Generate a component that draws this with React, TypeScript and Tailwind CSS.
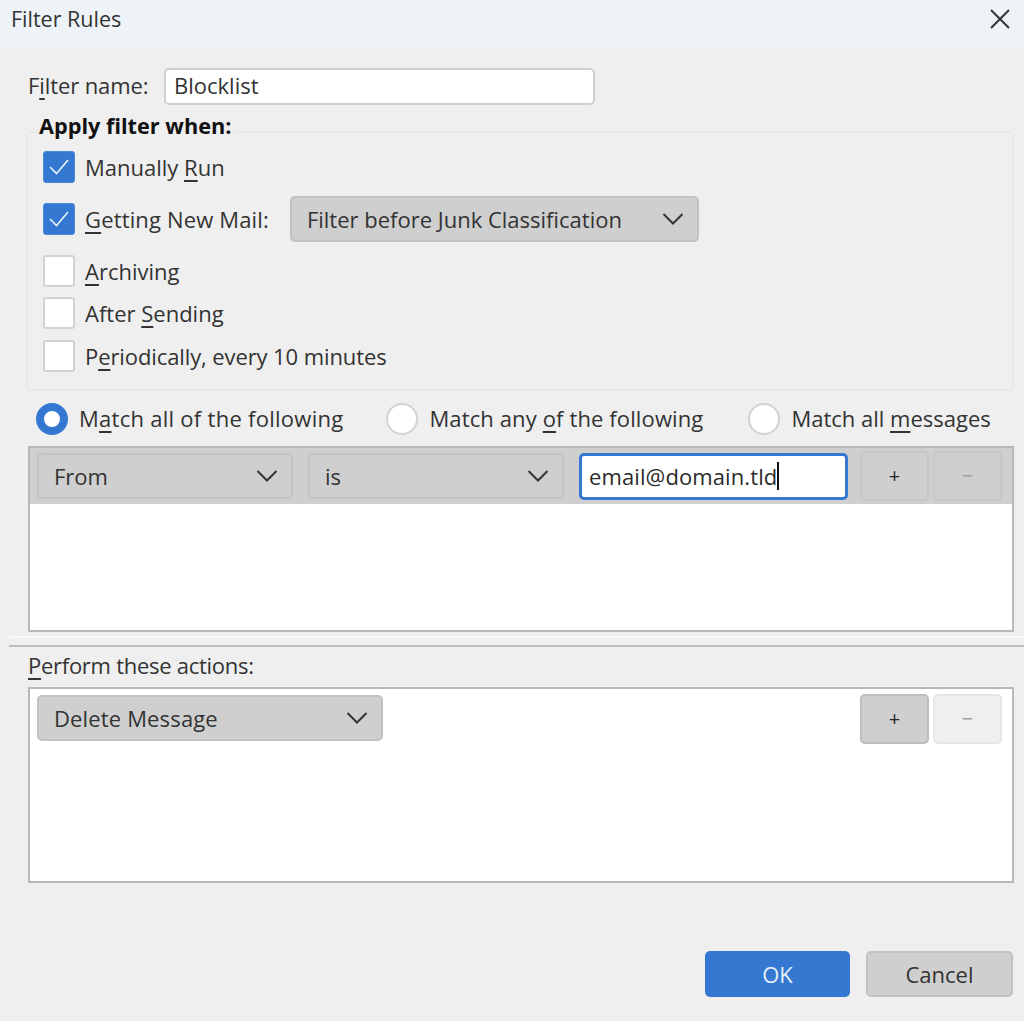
import React from "react";

function Chevron() {
  return (
    <svg width="22" height="14" viewBox="0 0 22 14" fill="none" className="shrink-0">
      <path d="M1.5 2 L11 11.5 L20.5 2" stroke="#333" strokeWidth="2" />
    </svg>
  );
}

function Check({ on, label }: { on: boolean; label: React.ReactNode }) {
  return (
    <div className="flex items-center gap-[10px]">
      {on ? (
        <div className="w-[32px] h-[32px] rounded-[3px] bg-[#3478d2] border border-[#4a88d8] flex items-center justify-center">
          <svg width="22" height="18" viewBox="0 0 22 18" fill="none">
            <path d="M2 9 L8.5 15.5 L20 2" stroke="#eaf2fb" strokeWidth="1.6" />
          </svg>
        </div>
      ) : (
        <div className="w-[32px] h-[32px] rounded-[3px] bg-white border-2 border-[#d2d2d2]" />
      )}
      <span>{label}</span>
    </div>
  );
}

function Radio({ on, label, className }: { on?: boolean; label: React.ReactNode; className: string }) {
  return (
    <div className={"flex items-center gap-[11px] " + className}>
      {on ? (
        <div className="w-[32px] h-[32px] rounded-full border-[8px] border-[#3478d2] bg-white" />
      ) : (
        <div className="w-[32px] h-[32px] rounded-full border-2 border-[#d2d2d2] bg-white" />
      )}
      <span className="pb-[2px]">{label}</span>
    </div>
  );
}

function Select({ label, w, className = "", textClass = "" }: { label: string; w: string; className?: string; textClass?: string }) {
  return (
    <div className={"h-[46px] rounded-[5px] bg-[#cfcfcf] border-2 border-[#c2c2c2] flex items-center justify-between pl-[15px] pr-[13px] " + w + " " + className}>
      <span className={"pb-[1px] " + textClass}>{label}</span>
      <Chevron />
    </div>
  );
}

function SmallButton({ sym, dim, light }: { sym: string; dim?: boolean; light?: boolean }) {
  const bg = light ? "bg-[#efefef] border-[#e6e6e6]" : dim ? "bg-[#cfcfcf] border-[#c6c6c6]" : "bg-[#cfcfcf] border-[#bdbdbd]";
  const fg = light || sym === "−" ? " text-[#a0a0a0]" : " text-[#222]";
  return (
    <div className={"w-[69px] h-[50px] rounded-[5px] border-2 flex items-center justify-center text-[20px] " + bg + fg}>
      {sym}
    </div>
  );
}

export default function App() {
  return (
    <div className="w-[1024px] h-[1021px] bg-[#efefef] text-[#333] text-[22px] leading-[30px] font-['Open_Sans','Noto_Sans',sans-serif] flex flex-col overflow-hidden">
      <div className="h-[47px] shrink-0 bg-[#eef3f8] flex items-center justify-between pl-[11px] pr-[13px] pb-[9px]">
        <span className="text-[21.5px]">Filter Rules</span>
        <svg width="22" height="22" viewBox="0 0 22 22" fill="none">
          <path d="M2 2 L20 20 M20 2 L2 20" stroke="#333" strokeWidth="2" />
        </svg>
      </div>

      <div className="flex items-center pl-[28px] mt-[21px] h-[36px] shrink-0">
        <span className="w-[136px] shrink-0 pb-[2px] tracking-[-0.1px]">F<u className="underline-offset-4">i</u>lter name:</span>
        <div className="w-[431px] h-[37px] rounded-[5px] bg-white border-2 border-[#cfcfcf] pl-[8px] pb-[2px] flex items-center">Blocklist</div>
      </div>

      <fieldset className="ml-[26px] mr-[10px] mt-[9px] h-[278px] border-2 border-[#e9e9e9] rounded-[5px] pl-[15px] shrink-0">
        <legend className="font-bold text-[#111] text-[21.7px] leading-[26px] ml-[-7px] px-[3px] pb-[12px]">Apply filter when:</legend>
        <div className="flex flex-col">
          <Check on label={<>Manually <u className="underline-offset-4">R</u>un</>} />
          <div className="flex items-center mt-[13px]">
            <Check on label={<span className="tracking-[0.15px]"><u className="underline-offset-4">G</u>etting New Mail:</span>} />
            <Select label="Filter before Junk Classification" w="w-[409px]" className="ml-[21px]" />
          </div>
          <div className="mt-[13px]"><Check on={false} label={<><u className="underline-offset-4">A</u>rchiving</>} /></div>
          <div className="mt-[10px]"><Check on={false} label={<>After <u className="underline-offset-4">S</u>ending</>} /></div>
          <div className="mt-[11px]"><Check on={false} label={<span className="tracking-[-0.1px]">P<u className="underline-offset-4">e</u>riodically, every 10 minutes</span>} /></div>
        </div>
      </fieldset>

      <div className="flex items-center h-[32px] mt-[12px] shrink-0">
        <Radio on className="ml-[36px]" label={<span className="tracking-[0.27px]">M<u className="underline-offset-4">a</u>tch all of the following</span>} />
        <Radio className="ml-[43px]" label={<span className="tracking-[0.12px]">Match any <u className="underline-offset-4">o</u>f the following</span>} />
        <Radio className="ml-[45px]" label={<>Match all <u className="underline-offset-4">m</u>essages</>} />
      </div>

      <div className="ml-[28px] w-[986px] h-[186px] mt-[11px] border-2 border-[#b8b8b8] bg-white shrink-0">
        <div className="h-[56px] bg-[#cfcfcf] flex items-center pl-[7px] pr-[10px] justify-between">
          <div className="flex items-center gap-[15px]">
            <Select label="From" w="w-[256px]" />
            <Select label="is" w="w-[256px]" />
            <div className="w-[269px] h-[47px] rounded-[5px] bg-white border-[3px] border-[#3478d2] pl-[7px] flex items-center text-[#2b2b2b]">
              <span className="tracking-[0.1px]">email@domain.tld</span>
              <span className="w-[2px] h-[28px] bg-[#111]" />
            </div>
          </div>
          <div className="flex items-center gap-[4px]">
            <SmallButton sym="+" dim />
            <SmallButton sym="−" dim />
          </div>
        </div>
      </div>

      <div className="ml-[9px] h-[2px] mt-[4px] bg-[#f9f9f9] shrink-0" />
      <div className="ml-[9px] h-[2px] mt-[7px] bg-[#bdbdbd] shrink-0" />

      <div className="pl-[28px] mt-[3px] shrink-0 tracking-[-0.27px]"><u className="underline-offset-4">P</u>erform these actions:</div>

      <div className="ml-[28px] w-[986px] h-[196px] mt-[7px] border-2 border-[#b8b8b8] bg-white flex items-start justify-between pl-[7px] pr-[10px] pt-[5px] shrink-0">
        <Select label="Delete Message" w="w-[346px]" className="mt-[1px]" textClass="tracking-[0.15px]" />
        <div className="flex items-center gap-[4px]">
          <SmallButton sym="+" />
          <SmallButton sym="−" light />
        </div>
      </div>

      <div className="flex justify-end gap-[16px] pr-[11px] mt-[68px] shrink-0">
        <div className="w-[145px] h-[46px] rounded-[5px] bg-[#3478d2] text-[#e8f0fa] flex items-center justify-center">OK</div>
        <div className="w-[147px] h-[46px] rounded-[5px] bg-[#cfcfcf] border-2 border-[#c2c2c2] flex items-center justify-center">Cancel</div>
      </div>
    </div>
  );
}
